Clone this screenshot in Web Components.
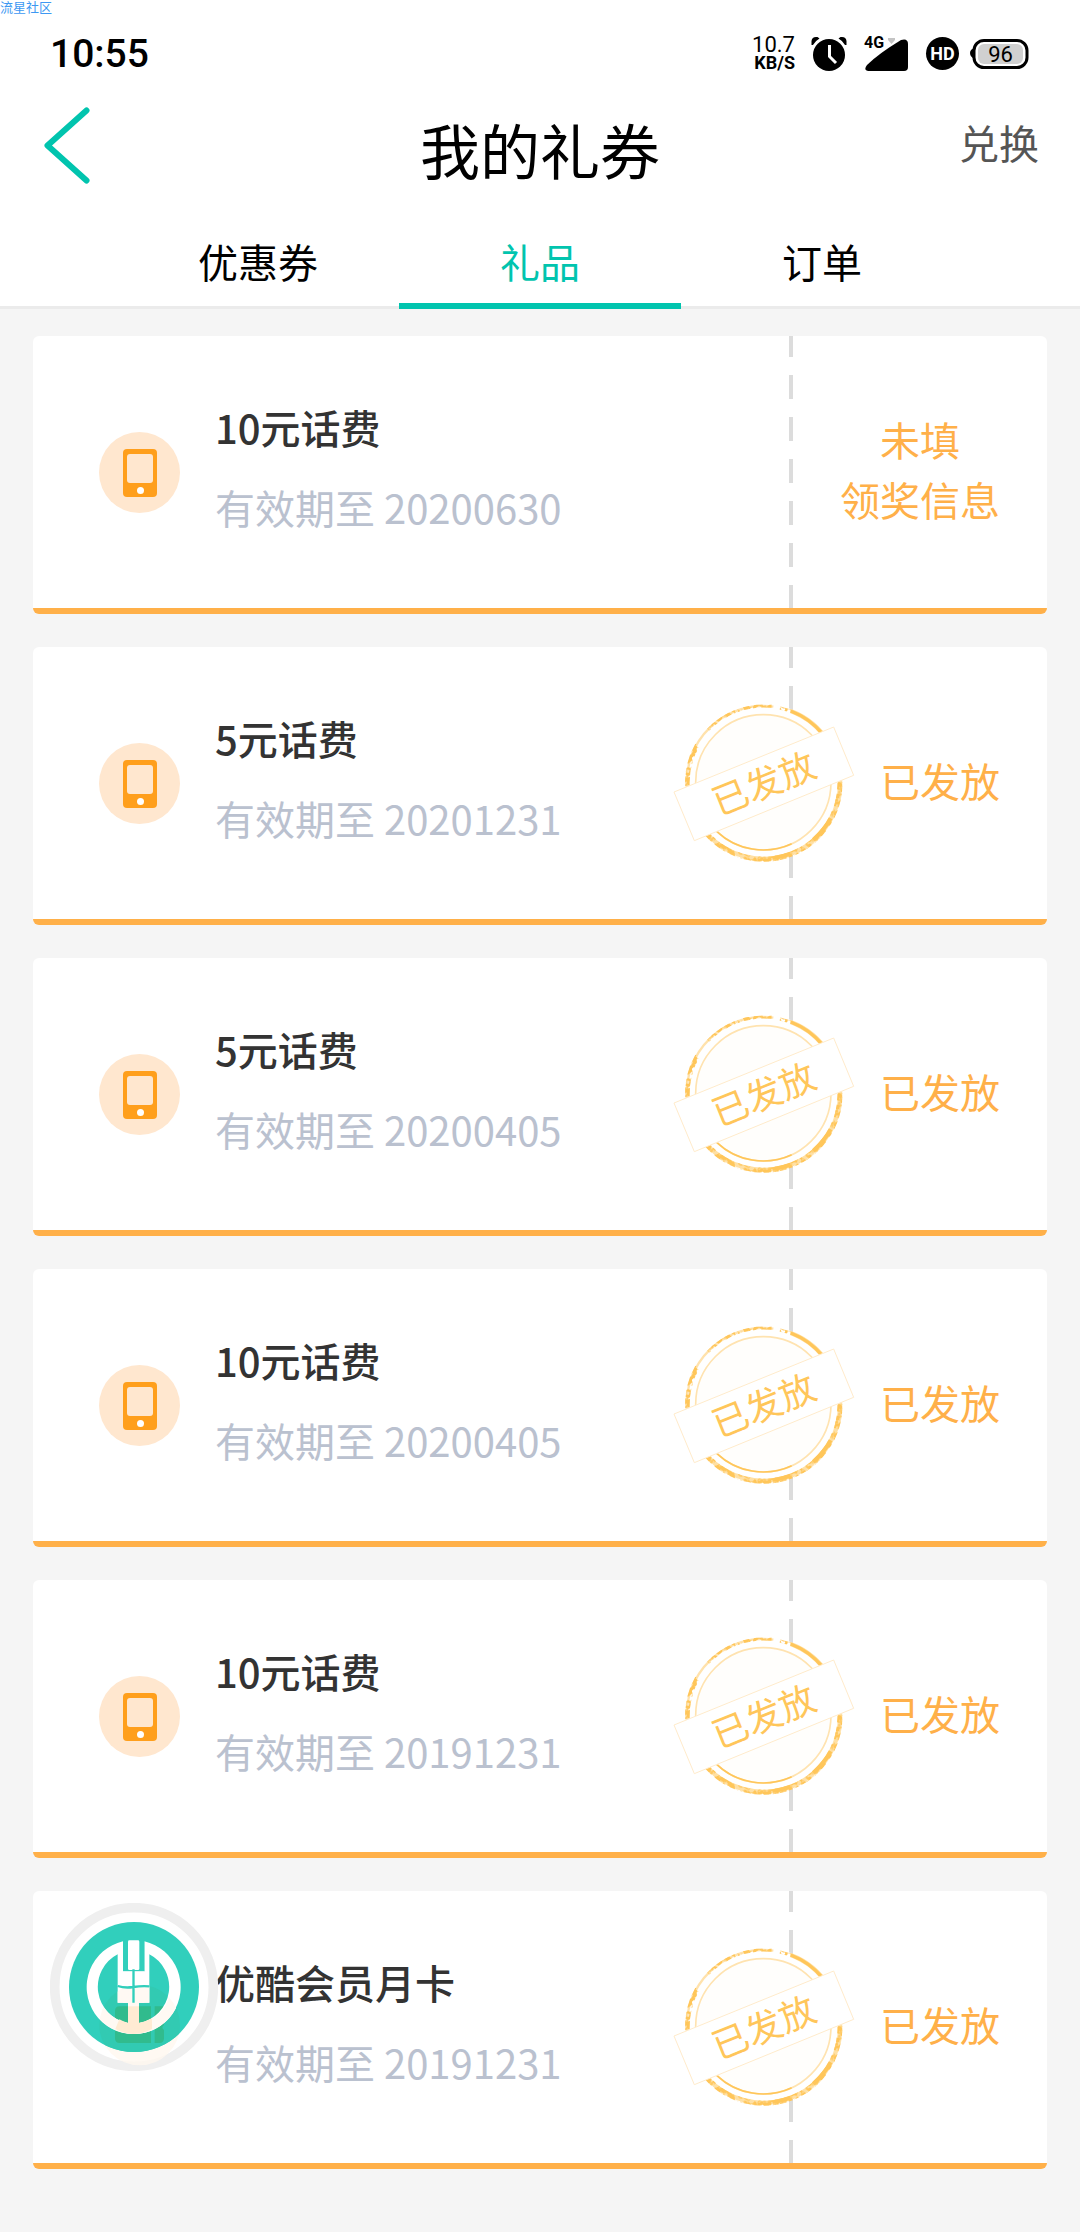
<!DOCTYPE html>
<html lang="zh-CN">
<head>
<meta charset="utf-8">
<meta name="viewport" content="width=device-width, initial-scale=1">
<title>我的礼券</title>
<style>
body { margin: 0; background: #f5f5f5; font-family: "Noto Sans CJK SC", "Noto Sans", sans-serif; font-size: 40px; line-height: 60px; color: #000; }
</style>
</head>
<body>
<coupon-app></coupon-app>
<script>
function define(name, html) {
  const tpl = document.createElement('template');
  tpl.innerHTML = html;
  customElements.define(name, class extends HTMLElement {
    constructor() {
      super();
      this.attachShadow({ mode: 'open' }).append(tpl.content.cloneNode(true));
    }
  });
}

define('site-mark', `
<style>:host { position: absolute; left: 0; top: 0; font-size: 13px; line-height: 14px; color: #3d98f2; }</style>
<slot></slot>`);

define('status-bar', `
<style>
:host { display: flex; align-items: center; height: 76px; padding: 32px 50px 0; box-sizing: border-box; font-family: Roboto, sans-serif; }
time { flex: 1; font-size: 39px; font-weight: 500; line-height: 44px; }
.speed { display: flex; flex-direction: column; text-align: right; font-size: 22px; line-height: 18px; margin-right: 16px; }
.speed b { font-size: 18px; font-weight: 700; }
svg { display: block; overflow: visible; }
.alarm { margin-right: 17px; }
.signal { margin-right: 18px; }
.hd { margin-right: 11px; }
</style>
<time>10:55</time>
<span class="speed"><span>10.7</span><b>KB/S</b></span>
<svg class="alarm" width="36" height="36" viewBox="0 0 36 36">
  <path d="M0.5 9V5Q1 1 5 1H6.500L8.500 2.500Q4 5 2 9ZM35.500 9V5Q35 1 31 1H29.500L27.500 2.500Q32 5 34 9Z"/>
  <circle cx="18" cy="19" r="16"/>
  <path d="M18.500 9V20.500L25 27" fill="none" stroke="#fff" stroke-width="3"/>
</svg>
<svg class="signal" width="44" height="36" viewBox="0 0 44 36">
  <path d="M37 4Q44 2 44 8V31Q44 35 40 35H4Q-1 34 3 29Q14 18 37 4Z"/>
  <path d="M24 2H31V4L27.500 8L24 4Z" fill="#c4c4c4"/>
  <text x="0" y="12" font-size="16" font-weight="700">4G</text>
</svg>
<svg class="hd" width="33" height="36" viewBox="0 0 33 36">
  <circle cx="16.500" cy="17.500" r="16.500"/>
  <text x="16.500" y="24" text-anchor="middle" font-size="18" font-weight="700" fill="#fff">HD</text>
</svg>
<svg width="60" height="36" viewBox="0 0 60 36">
  <path d="M5 12Q0 13 0 17T5 23Z"/>
  <rect x="4" y="4.500" width="53" height="27" rx="10" fill="#fff" stroke="#000" stroke-width="3"/>
  <rect x="8" y="8" width="45" height="20" rx="6" fill="#d0d0d0"/>
  <text x="30.500" y="26" text-anchor="middle" font-size="22">96</text>
</svg>`);

define('page-header', `
<style>
:host { display: grid; grid-template-columns: 1fr auto 1fr; align-items: center; height: 138px; padding: 0 41px; }
button { border: 0; padding: 0; background: none; font: inherit; }
.back { justify-self: start; }
.back svg { display: block; }
h1 { margin: 0; padding-top: 8px; font-size: 60px; font-weight: 400; line-height: 90px; }
.action { justify-self: end; padding-bottom: 6px; color: #555; }
</style>
<button class="back" aria-label="返回"><svg width="51" height="78" viewBox="0 0 51 78"><path d="M45.500 4.500L6.500 39.500L45.500 74.500" fill="none" stroke="#01c4ae" stroke-width="6" stroke-linecap="round" stroke-linejoin="round"/></svg></button>
<h1><slot></slot></h1>
<button class="action"><slot name="action"></slot></button>`);

define('tab-bar', `
<style>:host { display: flex; justify-content: center; height: 92px; border-bottom: 3px solid #ebebeb; padding: 0 117px; }</style>
<slot></slot>`);

define('tab-item', `
<style>
:host { display: block; flex: 1; color: #000; }
:host([selected]) { color: #01c4ae; }
button { width: 100%; height: 95px; border: 0; border-bottom: 6px solid transparent; padding: 4px 0 0; background: none; color: inherit; font: inherit; box-sizing: border-box; display: block; }
:host([selected]) button { border-color: #01c4ae; }
</style>
<button role="tab"><slot></slot></button>`);

define('phone-icon', `
<style>:host, svg { display: block; }</style>
<svg width="81" height="81" viewBox="0 0 81 81">
  <circle cx="40.500" cy="40.500" r="40.500" fill="#ffe7cf"/>
  <rect x="24" y="17" width="34" height="48" rx="4" fill="#ff9f1c"/>
  <rect x="28" y="22" width="26" height="29" rx="3" fill="#ffe7cf"/>
  <circle cx="41.500" cy="58.500" r="3.500" fill="#fff"/>
</svg>`);

define('bank-logo', `
<style>:host, svg { display: block; }</style>
<svg width="168" height="168" viewBox="30 29 504 504">
  <defs><clipPath id="disc"><circle cx="282" cy="281" r="252"/></clipPath>
  <clipPath id="gift"><circle cx="299" cy="395" r="121"/></clipPath></defs>
  <circle cx="282" cy="281" r="238" fill="#fff" stroke="#efefef" stroke-width="29"/>
  <g clip-path="url(#disc)"><circle cx="299" cy="395" r="121" fill="#fff8ef" opacity=".8"/></g>
  <circle cx="282" cy="281" r="195" fill="#31cfbc"/>
  <g clip-path="url(#gift)"><circle cx="282" cy="281" r="195" fill="#32cab2"/></g>
  <path d="M239 339H333V449H239Q225 449 225 435V353Q225 339 239 339ZM344 339H372V395Q362 402 372 410V435Q372 449 358 449H344Z" fill="#31bb8d"/>
  <path d="M249 144A141 141 0 1 0 313 144V234H249ZM233 183V328H264V389A110 110 0 0 1 233 183ZM328 183A110 110 0 0 1 297 389V328H328Z" fill="#fff" fill-rule="evenodd"/>
  <rect x="249" y="141" width="64" height="93" fill="#31cfbc"/>
  <path d="M249 234H313V328H249Z" fill="#fff"/>
  <rect x="264" y="141" width="34" height="89" rx="4" fill="#fff"/>
  <g clip-path="url(#gift)">
    <path d="M423 281A141 141 0 0 1 141 281H172A110 110 0 0 0 264 389V328H233V281H328V328H297V389A110 110 0 0 0 392 281Z" fill="#fff9f3"/>
  </g>
  <path d="M264 339H297V389Q318 385 336 375V407Q281 437 226 407L238 378Q250 385 264 389Z" fill="#ffebd3"/>
  <path d="M280.500 228V328M233 278Q255 285 280 281T328 279" fill="none" stroke="#31cfbc" stroke-width="7"/>
</svg>`);

define('issued-stamp', `
<style>:host, svg { display: block; }</style>
<svg width="200" height="180" viewBox="0 0 600 540">
  <defs><filter id="grain" filterUnits="userSpaceOnUse" x="-260" y="-260" width="520" height="520">
    <feTurbulence type="fractalNoise" baseFrequency=".07" numOctaves="2" seed="4" result="n"/>
    <feColorMatrix in="n" type="matrix" values="0 0 0 0 0  0 0 0 0 0  0 0 0 0 0  6 0 0 0 -2.300" result="m"/>
    <feComposite in="SourceGraphic" in2="m" operator="in"/>
  </filter></defs>
  <circle cx="295" cy="268" r="235" fill="#fff"/>
  <circle cx="295" cy="268" r="202" fill="#fffefc"/>
  <g fill="none" stroke="#ffc65a" transform="translate(295 268)">
    <circle r="203" stroke-width="5" stroke="#ffe3b0"/>
    <path d="M-140 147A203 203 0 0 0 85 184" stroke-width="5"/>
    <path d="M82 -214A229 229 0 0 1 25 228A229 229 0 0 1 -228 20" stroke-width="13" opacity=".55"/>
    <path d="M-229 20A229 229 0 0 1 30 -227" stroke-width="7" opacity=".5"/>
    <g filter="url(#grain)">
      <path d="M-228 10A228 228 0 0 1 -198 -112" stroke-width="14"/>
      <path d="M-165 -158A229 229 0 0 1 25 -228M50 -223L82 -214" stroke-width="9"/>
      <path d="M230 0A229 229 0 0 1 -170 154" stroke-width="15"/>
    </g>
    <path d="M82 -214A229 229 0 0 1 177 -146" stroke-width="10"/>
    <path d="M202 108A229 229 0 0 1 150 172M82 214A229 229 0 0 1 35 226" stroke-width="12"/>
  </g>
  <path d="M27 297L506 102L566 247L88 443Z" fill="#fff" stroke="#ffebcb" stroke-width="3"/>
  <text transform="translate(297 272) rotate(-22)" y="39" text-anchor="middle" font-size="108" fill="#ffc65a">已发放</text>
</svg>`);

define('coupon-card', `
<style>
:host { display: flex; height: 272px; background: #fff; border-bottom: 6px solid #ffb049; border-radius: 6px; }
.icon { position: relative; flex: none; width: 116px; padding-left: 66px; display: flex; align-items: center; }
.cover { position: absolute; left: 17px; top: 12px; }
.info { flex: 1; display: flex; flex-direction: column; justify-content: center; gap: 20px; padding-bottom: 10px; }
h2 { margin: 0; font-size: 40px; line-height: 60px; font-weight: 500; color: #333; }
p { margin: 0; color: #bac1cf; }
.state { position: relative; flex: none; width: 258px; box-sizing: border-box; padding: 0 47px 6px 0; display: flex; align-items: center; justify-content: flex-end; text-align: center; color: #ffb049;
  background: repeating-linear-gradient(#dcdcdc 0 24px, transparent 24px 42px) 0 -3px / 4px 300px no-repeat; }
.seal { position: absolute; left: -124px; top: 46px; }
</style>
<div class="icon"><slot name="icon"></slot><div class="cover"><slot name="cover"></slot></div></div>
<div class="info"><h2><slot></slot></h2><p><slot name="date"></slot></p></div>
<div class="state"><div class="seal"><slot name="seal"></slot></div><slot name="state"></slot></div>`);

define('coupon-list', `
<style>:host { display: flex; flex-direction: column; gap: 33px; padding: 27px 33px 66px; }</style>
<slot></slot>`);

define('coupon-app', `
<style>
:host { display: block; position: relative; }
header { background: #fff; }
</style>
<header>
  <status-bar></status-bar>
  <page-header>我的礼券<span slot="action">兑换</span></page-header>
  <tab-bar role="tablist"><tab-item>优惠券</tab-item><tab-item selected>礼品</tab-item><tab-item>订单</tab-item></tab-bar>
</header>
<coupon-list>
  <coupon-card><phone-icon slot="icon"></phone-icon>10元话费<span slot="date">有效期至 20200630</span><span slot="state">未填<br>领奖信息</span></coupon-card>
  <coupon-card><phone-icon slot="icon"></phone-icon>5元话费<span slot="date">有效期至 20201231</span><issued-stamp slot="seal"></issued-stamp><span slot="state">已发放</span></coupon-card>
  <coupon-card><phone-icon slot="icon"></phone-icon>5元话费<span slot="date">有效期至 20200405</span><issued-stamp slot="seal"></issued-stamp><span slot="state">已发放</span></coupon-card>
  <coupon-card><phone-icon slot="icon"></phone-icon>10元话费<span slot="date">有效期至 20200405</span><issued-stamp slot="seal"></issued-stamp><span slot="state">已发放</span></coupon-card>
  <coupon-card><phone-icon slot="icon"></phone-icon>10元话费<span slot="date">有效期至 20191231</span><issued-stamp slot="seal"></issued-stamp><span slot="state">已发放</span></coupon-card>
  <coupon-card><bank-logo slot="cover"></bank-logo>优酷会员月卡<span slot="date">有效期至 20191231</span><issued-stamp slot="seal"></issued-stamp><span slot="state">已发放</span></coupon-card>
</coupon-list>
<site-mark>流星社区</site-mark>`);
</script>
</body>
</html>
